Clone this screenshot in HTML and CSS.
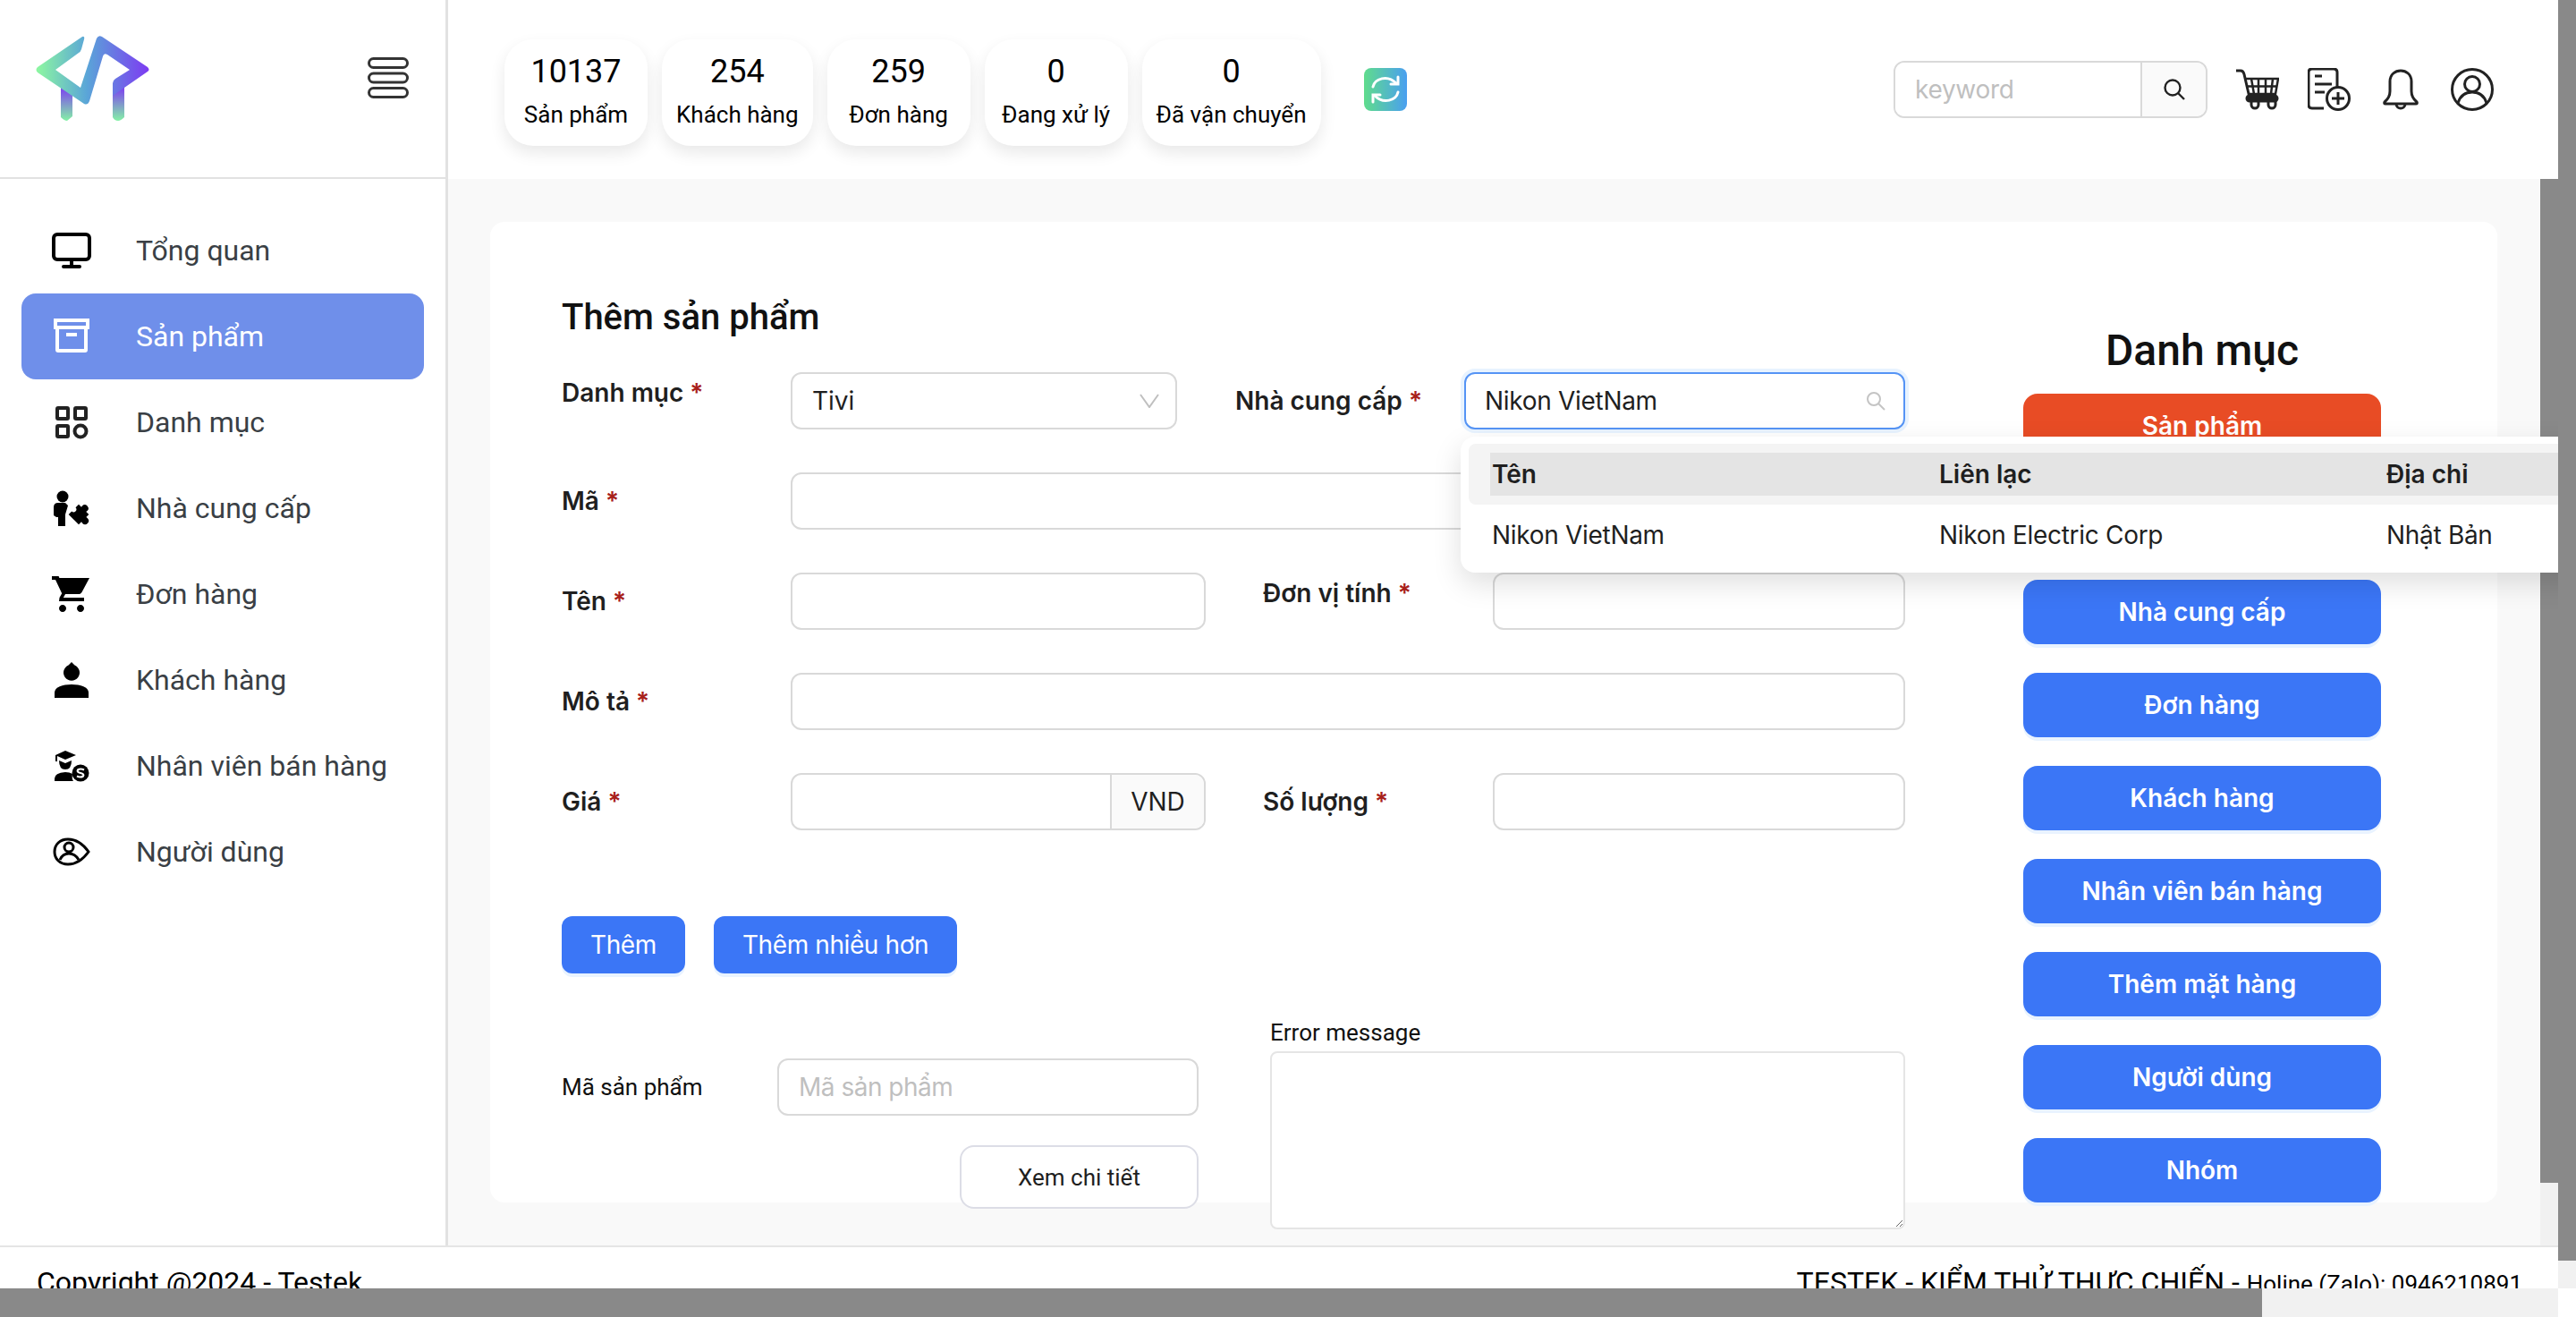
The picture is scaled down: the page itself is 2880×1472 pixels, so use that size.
FILE: index.html
```html
<!DOCTYPE html>
<html lang="vi">
<head>
    <meta charset="UTF-8">
    <meta name="viewport" content="width=device-width, initial-scale=1.0">
    <title>Testek - Thêm sản phẩm</title>
    <link rel="stylesheet" href="styles.css">
</head>
<body>
<div class="page">
    <div class="viewport">
        <div class="app">
            <aside class="sidebar">
                <div class="side-logo">
                    <svg class="logo" viewBox="40 41 127 95">
                        <defs>
                            <linearGradient id="logoMain" x1="0" y1="0" x2="1" y2="0">
                                <stop offset="0" stop-color="#8df8a0"/>
                                <stop offset="0.45" stop-color="#5aa5d8"/>
                                <stop offset="1" stop-color="#7d3bf2"/>
                            </linearGradient>
                            <linearGradient id="logoLeg" x1="0" y1="0" x2="0" y2="1">
                                <stop offset="0" stop-color="#7d3bf2"/>
                                <stop offset="1" stop-color="#84f2a6"/>
                            </linearGradient>
                        </defs>
                        <path fill="url(#logoLeg)" d="M68 98H81V131L75 136Q72 136 68 132Z"/>
                        <path fill="url(#logoLeg)" d="M126 98H139V132Q135 136 132 136Q128 136 126 132Z"/>
                        <path fill="url(#logoMain)" d="M92 42Q95 41 94 45L91 56Q90 59 88 60L62 79L90 99L108 44Q110 40 114 42L165 76Q168 79 165 81L139 99L126 108V94Q126 91 129 89L145 79L120 62Q116 60 115 64L100 114Q98 119 94 117L42 82Q39 79 42 76Z"/>
                    </svg>
                    <svg class="burger" viewBox="0 0 46 46" fill="none" stroke="#333" stroke-width="3">
                        <rect x="1.5" y="1.5" width="43" height="10" rx="5"/>
                        <rect x="1.5" y="18" width="43" height="10" rx="5"/>
                        <rect x="1.5" y="34.5" width="43" height="10" rx="5"/>
                    </svg>
                </div>
                <nav class="menu">
                    <a class="menu-item">
                        <svg class="menu-icon" viewBox="0 0 44 44" fill="none" stroke="#000" stroke-width="4">
                            <rect x="2" y="4" width="40" height="28" rx="4"/>
                            <path d="M22 32V40M13 40H31" stroke-linecap="round"/>
                        </svg>
                        Tổng quan
                    </a>
                    <a class="menu-item menu-item-active">
                        <svg class="menu-icon" viewBox="0 0 44 44" fill="none" stroke="#fff" stroke-width="4">
                            <rect x="4" y="4" width="36" height="8"/>
                            <path d="M6 12V37Q6 38 7 38H37Q38 38 38 37V12M16 20H28"/>
                        </svg>
                        Sản phẩm
                    </a>
                    <a class="menu-item">
                        <svg class="menu-icon" viewBox="0 0 44 44" fill="none" stroke="#222" stroke-width="4">
                            <rect x="6" y="6" width="12" height="12" rx="1"/>
                            <rect x="26" y="6" width="12" height="12" rx="1"/>
                            <rect x="6" y="26" width="12" height="12" rx="1"/>
                            <circle cx="32" cy="32" r="6.5"/>
                        </svg>
                        Danh mục
                    </a>
                    <a class="menu-item">
                        <svg class="menu-icon" viewBox="0 0 44 44" fill="#000">
                            <circle cx="12" cy="9" r="6.5"/>
                            <path d="M2 21Q2 16 7 16H15L18 19L15 29V42H7V32H5L2 30Z"/>
                            <g transform="rotate(45 30 29)">
                                <rect x="22" y="21" width="16" height="16"/>
                                <circle cx="30" cy="19.500" r="4"/>
                                <circle cx="40" cy="29" r="4"/>
                                <circle cx="22" cy="29" r="3" fill="#fff"/>
                            </g>
                        </svg>
                        Nhà cung cấp
                    </a>
                    <a class="menu-item">
                        <svg class="menu-icon" viewBox="1 2 22 20" fill="#000">
                            <path d="M7 18c-1.1 0-1.99.9-1.99 2S5.900 22 7 22s2-.9 2-2-.9-2-2-2zM1 2v2h2l3.600 7.590-1.350 2.450L5 16h14v-2H7.420l1.100-2h7.450c.75 0 1.410-.41 1.750-1.030L22 3H5.210l-.42-1H1zm16 16c-1.100 0-1.990.9-1.990 2s.89 2 1.990 2 2-.9 2-2-.9-2-2-2z"/>
                        </svg>
                        Đơn hàng
                    </a>
                    <a class="menu-item">
                        <svg class="menu-icon" viewBox="0 0 44 44" fill="#000">
                            <path d="M22 2L25.500 5.500A9 9 0 1 1 18.500 5.500Z"/>
                            <path d="M3 42V36C3 30 12 27 22 27C32 27 41 30 41 36V42Z"/>
                        </svg>
                        Khách hàng
                    </a>
                    <a class="menu-item">
                        <svg class="menu-icon" viewBox="0 0 44 44" fill="#000">
                            <path d="M15 5L27 10L15 15L6 11V17H4V10Z"/>
                            <path d="M8 16L15 19L22 16Q22 26 15 26Q8 26 8 16Z"/>
                            <path d="M3 39V36Q3 30 15 29Q20 29 23 31Q22 36 24 39Z"/>
                            <circle cx="32" cy="30" r="9.500"/>
                            <path d="M36 26.500Q32 24.500 29 26.500Q27.500 29 32 30Q36.500 31 35 33.500Q32 35.500 28 33.500" fill="none" stroke="#fff" stroke-width="2.200"/>
                        </svg>
                        Nhân viên bán hàng
                    </a>
                    <a class="menu-item">
                        <svg class="menu-icon" viewBox="0 0 44 44" fill="none" stroke="#000" stroke-width="3">
                            <path d="M18 8C28 8 36 15 41 22C36 29 28 36 18 36C9 36 3 30 3 22C3 14 9 8 18 8Z"/>
                            <circle cx="19" cy="17" r="5"/>
                            <path d="M9 31Q12 24 19 24Q26 24 30 31"/>
                        </svg>
                        Người dùng
                    </a>
                </nav>
            </aside>

            <div class="main">
                <header class="topbar">
                    <div class="stats">
                        <div class="stat"><div class="stat-num">10137</div><div class="stat-label">Sản phẩm</div></div>
                        <div class="stat"><div class="stat-num">254</div><div class="stat-label">Khách hàng</div></div>
                        <div class="stat"><div class="stat-num">259</div><div class="stat-label">Đơn hàng</div></div>
                        <div class="stat"><div class="stat-num">0</div><div class="stat-label">Đang xử lý</div></div>
                        <div class="stat"><div class="stat-num">0</div><div class="stat-label">Đã vận chuyển</div></div>
                    </div>
                    <svg class="refresh" viewBox="0 0 48 48">
                        <defs>
                            <linearGradient id="refreshBg" x1="0" y1="0" x2="1" y2="0">
                                <stop offset="0" stop-color="#5fdc8c"/>
                                <stop offset="1" stop-color="#4a9ff0"/>
                            </linearGradient>
                        </defs>
                        <rect width="48" height="48" rx="8" fill="url(#refreshBg)"/>
                        <g fill="none" stroke="#fff" stroke-width="3" stroke-linecap="round">
                            <path d="M10 21C12 12 26 7 36 17"/>
                            <path d="M38 10V18H30"/>
                            <path d="M38 27C36 36 22 41 12 31"/>
                            <path d="M10 38V30H18"/>
                        </g>
                    </svg>
                    <div class="search">
                        <input class="search-input" type="text" placeholder="keyword">
                        <div class="search-btn">
                            <svg viewBox="0 0 28 28" fill="none" stroke="#222" stroke-width="2.400">
                                <circle cx="12" cy="12" r="8.500"/>
                                <path d="M18 18L25 25"/>
                            </svg>
                        </div>
                    </div>
                    <div class="top-icons">
                        <svg viewBox="0 0 48 48" fill="none" stroke="#222" stroke-width="3">
                            <path d="M0 3H5Q8 3 9 7L15 33"/>
                            <path d="M10 12H47L44 29H14M17 12L20 29M25 12V29M33 12V29M41 12L39 29M11 20.500H45" stroke-width="2.500"/>
                            <rect x="12" y="31" width="34" height="6" rx="3" fill="#222"/>
                            <path d="M17 37V41A4 4 0 0 0 25 41V37M36 37V41A4 4 0 0 0 44 41V37"/>
                        </svg>
                        <svg viewBox="0 0 48 48" fill="none" stroke="#222" stroke-width="3">
                            <path d="M18 45H5Q1 45 1 41V5Q1 1 5 1H29Q33 1 33 5V22"/>
                            <path d="M8 9H16M8 18H27M8 27H19"/>
                            <circle cx="34" cy="34" r="12.500"/>
                            <path d="M34 27V41M27 34H41"/>
                        </svg>
                        <svg viewBox="0 0 48 48" fill="none" stroke="#222" stroke-width="3">
                            <path d="M6 38Q12 33 12 26V15C12 7 18 3 24 3C30 3 36 7 36 15V26Q36 33 42 38Q43 40 41 40H7Q5 40 6 38Z"/>
                            <path d="M19 41Q20 45 24 45Q28 45 29 41"/>
                        </svg>
                        <svg viewBox="0 0 48 48" fill="none" stroke="#222" stroke-width="3">
                            <circle cx="24" cy="24" r="22.500"/>
                            <circle cx="24" cy="18" r="8.500"/>
                            <path d="M8 39Q12 27 24 27Q36 27 40 39"/>
                        </svg>
                    </div>
                </header>

                <div class="content-row">
                    <main class="content">
                        <section class="card">
                            <div class="form-col">
                                <h1 class="form-title">Thêm sản phẩm</h1>
                                <div class="form-row">
                                    <label class="form-label form-label-up">Danh mục <span class="req">*</span></label>
                                    <div class="field field-select w-cat">
                                        <span>Tivi</span>
                                        <svg viewBox="0 0 22 16" fill="none" stroke="#bfbfbf" stroke-width="2"><path d="M1 1L11 15L21 1"/></svg>
                                    </div>
                                    <label class="form-label form-label-side1">Nhà cung cấp <span class="req">*</span></label>
                                    <div class="field field-focus w-supplier">
                                        <input class="field-input" type="text" value="Nikon VietNam">
                                        <svg class="field-search" viewBox="0 0 22 22" fill="none" stroke="#c4c4c4" stroke-width="2"><circle cx="9" cy="9" r="7"/><path d="M14 14L21 21"/></svg>
                                        <div class="dropdown">
                                            <div class="dd-head-wrap">
                                                <div class="dd-head">
                                                    <span>Tên</span><span>Liên lạc</span><span>Địa chỉ</span>
                                                </div>
                                            </div>
                                            <div class="dd-row">
                                                <span>Nikon VietNam</span><span>Nikon Electric Corp</span><span>Nhật Bản</span>
                                            </div>
                                        </div>
                                    </div>
                                </div>
                                <div class="form-row">
                                    <label class="form-label">Mã <span class="req">*</span></label>
                                    <div class="field w-full"></div>
                                </div>
                                <div class="form-row">
                                    <label class="form-label">Tên <span class="req">*</span></label>
                                    <div class="field w-half"></div>
                                    <label class="form-label form-label-up form-label-side2">Đơn vị tính <span class="req">*</span></label>
                                    <div class="field w-right"></div>
                                </div>
                                <div class="form-row">
                                    <label class="form-label">Mô tả <span class="req">*</span></label>
                                    <div class="field w-full"></div>
                                </div>
                                <div class="form-row">
                                    <label class="form-label">Giá <span class="req">*</span></label>
                                    <div class="field field-addon w-half"><div class="addon">VND</div></div>
                                    <label class="form-label form-label-side2">Số lượng <span class="req">*</span></label>
                                    <div class="field w-right"></div>
                                </div>
                                <div class="form-actions">
                                    <button class="btn">Thêm</button>
                                    <button class="btn">Thêm nhiều hơn</button>
                                </div>
                                <div class="form-bottom">
                                    <div class="lookup">
                                        <div class="lookup-row">
                                            <label class="lookup-label">Mã sản phẩm</label>
                                            <input class="lookup-input" type="text" placeholder="Mã sản phẩm">
                                        </div>
                                        <button class="btn-outline">Xem chi tiết</button>
                                    </div>
                                    <div class="error-box">
                                        <label class="error-label">Error message</label>
                                        <textarea class="error-text"></textarea>
                                    </div>
                                </div>
                            </div>
                            <div class="links-col">
                                <h2 class="links-title">Danh mục</h2>
                                <button class="link-btn link-btn-active">Sản phẩm</button>
                                <button class="link-btn"></button>
                                <button class="link-btn">Nhà cung cấp</button>
                                <button class="link-btn">Đơn hàng</button>
                                <button class="link-btn">Khách hàng</button>
                                <button class="link-btn">Nhân viên bán hàng</button>
                                <button class="link-btn">Thêm mặt hàng</button>
                                <button class="link-btn">Người dùng</button>
                                <button class="link-btn">Nhóm</button>
                            </div>
                        </section>
                    </main>
                    <div class="inner-bar"><div class="inner-thumb"></div></div>
                </div>
            </div>
        </div>
        <footer class="footer">
            <div>Copyright @2024 - Testek</div>
            <div>TESTEK - KIỂM THỬ THỰC CHIẾN - <span class="hotline">Holine (Zalo): 0946210891</span></div>
        </footer>
    </div>
    <div class="outer-bar"><div class="outer-thumb"></div></div>
    <div class="bottom-bar"><div class="bottom-thumb"></div></div>
    <div class="bar-corner"></div>
</div>
</body>
</html>
```

FILE: styles.css
```css
/* Reset default styles */
* {
  margin: 0;
  padding: 0;
  box-sizing: border-box;
}

html, body {
  height: 100%;
  overflow: hidden;
  background-color: white;
}

body {
  font-family: Inter, "Noto Sans", sans-serif;
  color: #1f1f1f;
  font-size: 28px;
}

/* Page frame with the browser scrollbars */
.page {
  display: grid;
  grid-template-columns: 2860px 20px;
  grid-template-rows: 1440px 32px;
  width: 2880px;
  height: 1472px;
  overflow: hidden;
}

.viewport {
  overflow: hidden;
  position: relative;
}

.outer-bar {
  background-color: #f1f1f1;
}

.outer-thumb {
  height: 1409px;
  background-color: #898989;
}

.bottom-bar {
  background-color: #f1f1f1;
}

.bottom-thumb {
  width: 2529px;
  height: 100%;
  background-color: #898989;
}

.bar-corner {
  background-color: white;
}

.app {
  display: flex;
  height: 1392px;
}

/* Sidebar */
.sidebar {
  width: 501px;
  flex: none;
  border-right: 3px solid #e2e2e2;
  background-color: white;
}

.side-logo {
  display: flex;
  justify-content: space-between;
  align-items: center;
  height: 200px;
  padding: 0 41px 24px 40px;
  border-bottom: 2px solid #e2e2e2;
}

.logo {
  width: 127px;
  height: 95px;
}

.burger {
  width: 46px;
  height: 46px;
  filter: blur(0.6px);
}

.menu {
  padding: 32px 24px 0;
}

.menu-item {
  display: flex;
  align-items: center;
  gap: 50px;
  width: 450px;
  height: 96px;
  padding-left: 34px;
  border-radius: 16px;
  font-family: Roboto, sans-serif;
  font-size: 32px;
  color: #3a3f45;
}

.menu-item-active {
  background-color: #6f8fea;
  color: white;
}

.menu-icon {
  width: 44px;
  height: 44px;
  flex: none;
}

/* Top bar */
.main {
  flex: 1;
  display: flex;
  flex-direction: column;
  min-width: 0;
}

.topbar {
  display: flex;
  align-items: center;
  height: 200px;
  flex: none;
  padding: 0 72px 0 63px;
  background-color: white;
}

.stats {
  display: flex;
  gap: 16px;
  margin-top: 7px;
}

.stat {
  min-width: 160px;
  height: 119px;
  padding: 12px 16px 0;
  border-radius: 32px;
  background-color: white;
  box-shadow: 0 8px 18px rgba(0, 0, 0, 0.09);
  text-align: center;
  font-family: Roboto, sans-serif;
  color: black;
  white-space: nowrap;
}

.stat-num {
  font-size: 36px;
  line-height: 48px;
}

.stat-label {
  font-size: 26px;
  line-height: 48px;
}

.refresh {
  width: 48px;
  height: 48px;
  flex: none;
  margin-left: 48px;
  filter: blur(0.6px);
}

.search {
  display: flex;
  width: 351px;
  height: 64px;
  margin-left: auto;
  border: 2px solid #d9d9d9;
  border-radius: 12px;
  overflow: hidden;
}

.search-input {
  flex: 1;
  min-width: 0;
  padding-left: 22px;
  border: none;
  outline: none;
  font: inherit;
  letter-spacing: -0.3px;
}

.search-input::placeholder,
.lookup-input::placeholder {
  color: #bfbfbf;
  opacity: 1;
}

.search-btn {
  display: flex;
  align-items: center;
  justify-content: center;
  width: 73px;
  flex: none;
  border-left: 2px solid #d9d9d9;
  background-color: #fafafa;
}

.search-btn svg {
  width: 28px;
  height: 28px;
}

.top-icons {
  display: flex;
  gap: 32px;
  margin-left: 32px;
}

.top-icons svg {
  width: 48px;
  height: 48px;
  filter: blur(0.5px);
}

/* Content */
.content-row {
  flex: 1;
  display: flex;
  min-height: 0;
}

.content {
  flex: 1;
  min-width: 0;
  padding: 48px 48px 0 47px;
  background-color: #f9f9f9;
}

.inner-bar {
  width: 20px;
  flex: none;
  background-color: #f1f1f1;
}

.inner-thumb {
  height: 1122px;
  background-color: #898989;
}

.card {
  display: flex;
  align-items: flex-start;
  height: 1096px;
  padding-left: 80px;
  border-radius: 16px;
  background-color: white;
}

.form-col {
  width: 1502px;
  flex: none;
  padding-top: 83px;
}

.form-title {
  margin-bottom: 37px;
  font-family: Roboto, sans-serif;
  font-size: 40px;
  font-weight: 500;
  line-height: 48px;
  color: #111;
}

.form-row {
  display: flex;
  align-items: center;
  height: 64px;
  margin-bottom: 48px;
}

.form-label {
  width: 256px;
  flex: none;
  font-size: 28px;
  font-weight: 600;
  white-space: nowrap;
}

.form-label-up {
  margin-bottom: 18px;
}

.form-label-side1 {
  margin-left: 65px;
}

.form-label-side2 {
  width: 257px;
  margin-left: 64px;
}

.req {
  color: #a8201a;
}

.field {
  position: relative;
  display: flex;
  align-items: center;
  height: 64px;
  flex: none;
  border: 2px solid #d9d9d9;
  border-radius: 12px;
  background-color: white;
}

.w-cat { width: 432px; }
.w-supplier { width: 493px; }
.w-full { width: 1246px; }
.w-half { width: 464px; }
.w-right { width: 461px; }

.field-select {
  justify-content: space-between;
  padding: 0 18px 0 22px;
}

.field-select svg {
  width: 22px;
  height: 16px;
}

.field-focus {
  border-color: #5594f5;
  box-shadow: 0 0 0 4px #e8f3ff;
}

.field-input {
  flex: 1;
  min-width: 0;
  padding-left: 21px;
  border: none;
  outline: none;
  background: none;
  color: inherit;
  font: inherit;
  letter-spacing: -0.3px;
}

.field-search {
  width: 22px;
  height: 22px;
  flex: none;
  margin-right: 20px;
}

.field-addon {
  justify-content: flex-end;
}

.addon {
  display: flex;
  align-items: center;
  justify-content: center;
  width: 105px;
  height: 100%;
  border-left: 2px solid #d9d9d9;
  border-radius: 0 10px 10px 0;
  background-color: #fafafa;
}

/* Supplier dropdown */
.dropdown {
  position: absolute;
  top: 70px;
  left: -6px;
  z-index: 10;
  width: 1400px;
  height: 152px;
  padding-top: 8px;
  border-radius: 16px;
  background-color: white;
  box-shadow: 0 12px 32px rgba(0, 0, 0, 0.13);
}

.dd-head-wrap {
  height: 68px;
  margin-left: 9px;
  padding: 10px 0 0 24px;
  border-radius: 8px 0 0 8px;
  background-color: #f4f4f4;
}

.dd-head {
  display: grid;
  grid-template-columns: 500px 500px 1fr;
  align-items: center;
  height: 48px;
  padding-left: 2px;
  background-color: #e4e4e4;
  font-weight: 600;
}

.dd-row {
  display: grid;
  grid-template-columns: 500px 500px 1fr;
  align-items: center;
  height: 68px;
  padding-left: 35px;
  letter-spacing: -0.3px;
}

/* Buttons */
.form-actions {
  display: flex;
  gap: 32px;
  margin-top: 96px;
}

.btn {
  height: 64px;
  padding: 0 32px;
  border: none;
  border-radius: 12px;
  background-color: #3b76f6;
  color: white;
  font: inherit;
  letter-spacing: -0.4px;
  box-shadow: 0 4px 0 #e9f3ff;
}

.form-bottom {
  display: flex;
  justify-content: space-between;
  margin-top: 47px;
}

.lookup {
  display: flex;
  flex-direction: column;
  width: 712px;
  padding-top: 48px;
}

.lookup-row {
  display: flex;
  align-items: center;
}

.lookup-label {
  width: 241px;
  flex: none;
  font-family: Roboto, sans-serif;
  font-size: 26px;
  color: #111;
}

.lookup-input {
  width: 471px;
  height: 64px;
  padding-left: 22px;
  border: 2px solid #d9d9d9;
  border-radius: 12px;
  outline: none;
  font: inherit;
  letter-spacing: -0.5px;
}

.btn-outline {
  align-self: flex-end;
  width: 267px;
  height: 71px;
  margin-top: 33px;
  border: 2px solid #dcdde6;
  border-radius: 16px;
  background-color: white;
  color: #1f1f1f;
  font-family: Roboto, sans-serif;
  font-size: 26px;
}

.error-box {
  width: 710px;
}

.error-label {
  display: block;
  height: 40px;
  font-family: Roboto, sans-serif;
  font-size: 26px;
  line-height: 38px;
  color: #111;
}

.error-text {
  display: block;
  width: 710px;
  height: 199px;
  border: 2px solid #e5e5e5;
  border-radius: 8px;
  outline: none;
  background-color: white;
}

.links-col {
  display: flex;
  flex-direction: column;
  align-items: center;
  gap: 32px;
  width: 400px;
  flex: none;
  margin-left: 132px;
  padding-top: 112px;
}

.links-title {
  height: 64px;
  margin-bottom: -16px;
  font-family: Roboto, sans-serif;
  font-size: 48px;
  font-weight: 500;
  line-height: 64px;
  color: #111;
}

.link-btn {
  width: 400px;
  height: 72px;
  flex: none;
  border: none;
  border-radius: 16px;
  background-color: #3b76f6;
  color: white;
  font: inherit;
  font-weight: 600;
  box-shadow: 0 4px 0 #e9f3ff;
}

.link-btn-active {
  background-color: #e84c25;
}

/* Footer */
.footer {
  display: flex;
  justify-content: space-between;
  align-items: baseline;
  height: 48px;
  padding: 19px 40px 0 41px;
  border-top: 2px solid #e5e5e5;
  background-color: white;
  font-family: Roboto, sans-serif;
  font-size: 32px;
  line-height: 40px;
  color: black;
  white-space: nowrap;
}

.hotline {
  font-size: 26px;
}
```
